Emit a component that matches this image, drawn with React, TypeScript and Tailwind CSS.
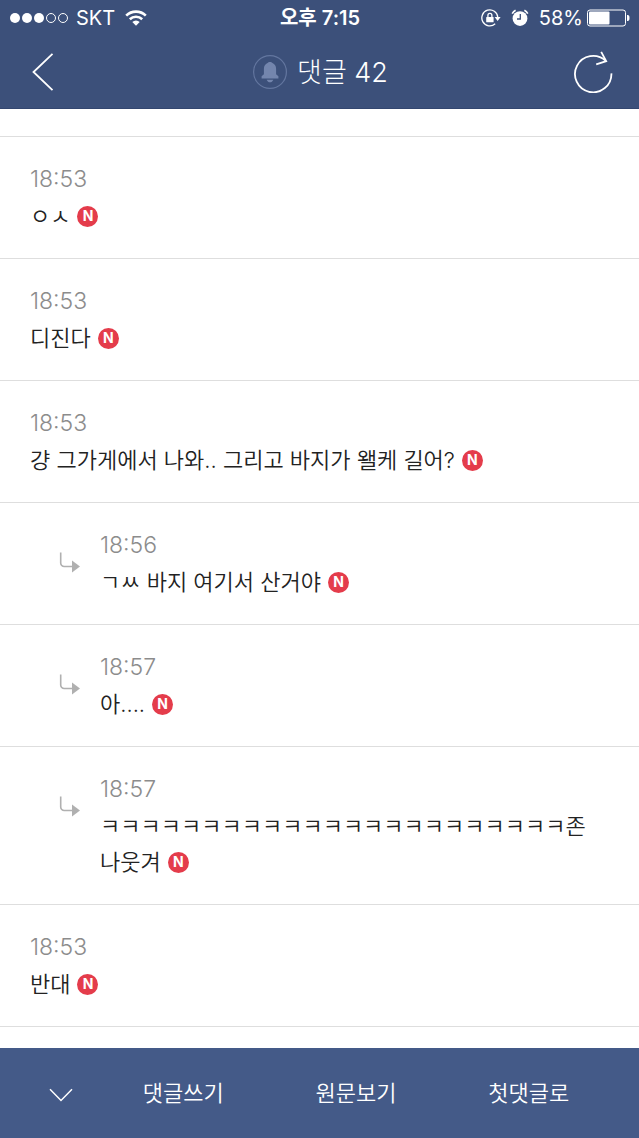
import clsx from "clsx";

type Comment = {
  time: string;
  text: string;
  reply?: boolean;
};

const comments: Comment[] = [
  { time: "18:53", text: "ㅇㅅ" },
  { time: "18:53", text: "디진다" },
  { time: "18:53", text: "걍 그가게에서 나와.. 그리고 바지가 왤케 길어?" },
  { time: "18:56", text: "ㄱㅆ 바지 여기서 산거야", reply: true },
  { time: "18:57", text: "아....", reply: true },
  { time: "18:57", text: "ㅋㅋㅋㅋㅋㅋㅋㅋㅋㅋㅋㅋㅋㅋㅋㅋㅋㅋㅋㅋㅋㅋㅋ존나웃겨", reply: true },
  { time: "18:53", text: "반대" },
];

function SignalDots() {
  return (
    <svg width="58" height="12" viewBox="0 0 58 12" aria-hidden="true">
      {[5, 17, 29].map((cx) => (
        <circle key={cx} cx={cx} cy="6" r="5" fill="#fff" />
      ))}
      {[41, 53].map((cx) => (
        <circle key={cx} cx={cx} cy="6" r="4.5" fill="none" stroke="#fff" />
      ))}
    </svg>
  );
}

function WifiIcon() {
  return (
    <svg width="22" height="16" viewBox="0 0 22 16" fill="none" stroke="#fff" strokeWidth="2.6" aria-hidden="true">
      <path d="M1.2 5.6a14 14 0 0 1 19.6 0" />
      <path d="M4.8 9.3a9 9 0 0 1 12.4 0" />
      <path d="M11 15.8 7.3 12.1a5.3 5.3 0 0 1 7.4 0Z" fill="#fff" stroke="none" />
    </svg>
  );
}

function RotationLockIcon() {
  return (
    <svg width="20" height="18" viewBox="0 0 20 18" fill="none" stroke="#fff" aria-hidden="true">
      <path d="M14.2 14.8A8 8 0 1 1 16.8 8.2" strokeWidth="1.3" />
      <path d="M13.6 8h6l-3 4Z" fill="#fff" stroke="none" />
      <rect x="5.2" y="8" width="7.4" height="5.3" rx="0.6" fill="#fff" stroke="none" />
      <path d="M6.9 8.2V6.4a2 2 0 0 1 4 0v1.8" strokeWidth="1.3" />
    </svg>
  );
}

function AlarmIcon() {
  return (
    <svg width="18" height="18" viewBox="0 0 18 18" fill="none" stroke="#fff" aria-hidden="true">
      <circle cx="9" cy="9.6" r="7.4" fill="#fff" stroke="none" />
      <path d="M1.2 4.6A9 9 0 0 1 4.6 1.2M13.4 1.2a9 9 0 0 1 3.4 3.4" strokeWidth="1.6" />
      <path d="M9.3 5v5H6" stroke="#3c507a" strokeWidth="1.3" />
    </svg>
  );
}

function BatteryIcon() {
  return (
    <svg width="43" height="18" viewBox="0 0 43 18" aria-hidden="true">
      <rect x="0.5" y="1" width="38" height="16" rx="2.5" fill="none" stroke="#fff" strokeWidth="1" />
      <rect x="2" y="2.5" width="20.5" height="13" rx="1" fill="#fff" />
      <path d="M40 6h.8c1 0 1.7.8 1.7 3s-.7 3-1.7 3H40Z" fill="#fff" />
    </svg>
  );
}

function BellIcon() {
  return (
    <svg width="34" height="34" viewBox="0 0 34 34" aria-hidden="true">
      <circle cx="17" cy="17" r="16.4" fill="none" stroke="#63769f" strokeWidth="1.2" />
      <path
        d="M17 7c1.2 0 2 .4 2.5 1.1 2.2.9 3.6 3 3.6 5.7v5.4l2.3 2v2.2H8.6v-2.2l2.3-2v-5.4c0-2.7 1.4-4.8 3.6-5.7C15 7.4 15.800 7 17 7Z"
        fill="#7385ad"
      />
      <path d="M13.600 24.700h6.800c-.8 1.700-2 2.600-3.400 2.600s-2.600-.9-3.400-2.600Z" fill="#7385ad" />
    </svg>
  );
}

function ReplyIcon() {
  return (
    <svg width="22" height="22" viewBox="0 0 22 22" fill="none" aria-hidden="true">
      <path d="M1.7 0.5V11a3.5 3.5 0 0 0 3.5 3.5H13" stroke="#b0b0b0" strokeWidth="1.6" />
      <path d="M13 8.5v12l8-6Z" fill="#b0b0b0" />
    </svg>
  );
}

function NewBadge() {
  return (
    <span className="ml-[7px] inline-flex size-[21px] items-center justify-center rounded-full bg-[#e43c4b] align-[3px] text-sm leading-none font-bold text-white">
      N
    </span>
  );
}

function CommentRow({ time, text, reply }: Comment) {
  return (
    <li className={clsx("flex border-t border-[#dedede] py-6 pr-10", reply ? "pl-[59px]" : "pl-[30px]")}>
      {reply && (
        <div className="w-[41px] shrink-0 pt-[25px]">
          <ReplyIcon />
        </div>
      )}
      <div className="flex min-w-0 flex-1 flex-col gap-px leading-9">
        <time className="text-[23px] font-light text-[#8c8c8c]">{time}</time>
        <p className="text-[22px] font-[350] text-[#222]">
          {text}
          <NewBadge />
        </p>
      </div>
    </li>
  );
}

export default function App() {
  return (
    <div className="flex min-h-screen flex-col bg-white font-['Inter','Noto_Sans_CJK_KR',sans-serif]">
      <header className="border-b border-[#33466f] bg-[#3c507a] text-white">
        <div className="grid h-[35px] grid-cols-[1fr_auto_1fr] items-center pr-[9px] pl-[10px] text-xl leading-none">
          <div className="flex items-center">
            <SignalDots />
            <span className="mr-[10px] ml-2">SKT</span>
            <WifiIcon />
          </div>
          <span className="font-semibold">오후 7:15</span>
          <div className="flex items-center justify-end">
            <RotationLockIcon />
            <span className="mx-[10px]">
              <AlarmIcon />
            </span>
            <span className="mr-1">58%</span>
            <BatteryIcon />
          </div>
        </div>
        <div className="flex h-[73px] items-center justify-between pr-[26px] pl-7">
          <button type="button" aria-label="뒤로" className="flex w-10 justify-start pl-1">
            <svg width="22" height="38" viewBox="0 0 22 38" fill="none" stroke="#fff" strokeWidth="1.8">
              <path d="M20.5 0.8 1.5 19l19 18.2" />
            </svg>
          </button>
          <h1 className="flex items-center gap-[10px] text-[27px] leading-9 font-light">
            <BellIcon />
            <span className="pt-0.5">댓글 42</span>
          </h1>
          <button type="button" aria-label="새로고침" className="flex w-10 justify-end">
            <svg width="40" height="42" viewBox="0 0 40 42" fill="none" stroke="#fff" strokeWidth="1.8">
              <path d="M38.4 22.4A18.200 18.200 0 1 1 32.500 9.600" />
              <path d="M28.2 0.8 33.2 10.2 23.2 13.4" />
            </svg>
          </button>
        </div>
      </header>

      <main className="flex-1 pt-[27px]">
        <ul className="border-b border-[#dedede]">
          {comments.map((comment, i) => (
            <CommentRow key={i} {...comment} />
          ))}
        </ul>
      </main>

      <footer className="flex h-[90px] items-center bg-[#445a88] px-6 text-[22px] font-[350] text-white">
        <button type="button" aria-label="접기" className="flex w-[73px] justify-center pt-1">
          <svg width="24" height="14" viewBox="0 0 24 14" fill="none" stroke="#fff" strokeWidth="1.5">
            <path d="M1 1.2 12 12.5 23 1.2" />
          </svg>
        </button>
        <nav className="grid flex-1 grid-cols-3 text-center">
          <a href="#write">댓글쓰기</a>
          <a href="#original">원문보기</a>
          <a href="#first">첫댓글로</a>
        </nav>
      </footer>
    </div>
  );
}
